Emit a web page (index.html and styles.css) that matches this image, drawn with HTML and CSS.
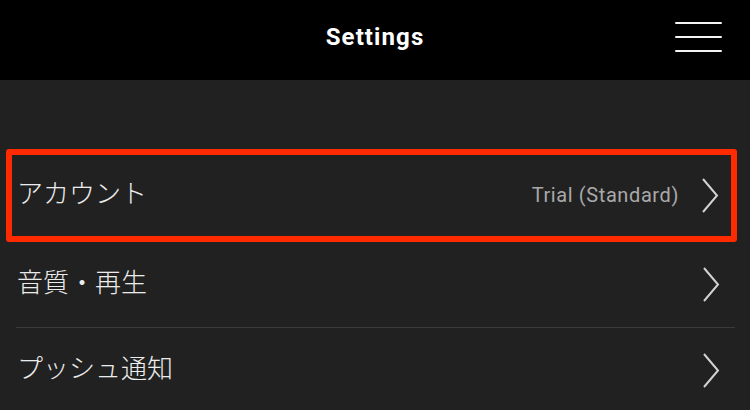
FILE: index.html
```html
<!DOCTYPE html>
<html lang="ja">
<head>
    <meta charset="UTF-8">
    <meta name="viewport" content="width=device-width, initial-scale=1.0">
    <title>Settings</title>
    <link rel="stylesheet" href="styles.css">
</head>
<body>
    <header class="topbar">
        <span></span>
        <h1 class="title">Settings</h1>
        <button class="menu" aria-label="menu">
            <span></span><span></span><span></span>
        </button>
    </header>

    <ul class="list">
        <li class="row highlight">
            <span class="label">アカウント</span>
            <span class="value">Trial (Standard)</span>
            <svg class="chevron" width="18" height="36" viewBox="0 0 18 36"><polyline points="2,1 16,17.5 2,34" /></svg>
        </li>
        <li class="row">
            <span class="label">音質・再生</span>
            <svg class="chevron" width="18" height="36" viewBox="0 0 18 36"><polyline points="2,1 16,17.5 2,34" /></svg>
        </li>
        <li class="row">
            <span class="label">プッシュ通知</span>
            <svg class="chevron" width="18" height="36" viewBox="0 0 18 36"><polyline points="2,1 16,17.5 2,34" /></svg>
        </li>
    </ul>
</body>
</html>
```

FILE: styles.css
```css
body {
    font-family: "Noto Sans CJK JP", "Noto Sans", sans-serif;
    margin: 0;
    background-color: #212121;
    color: #ececec;
    overflow: hidden;
}
.topbar {
    display: grid;
    grid-template-columns: 1fr auto 1fr;
    align-items: center;
    height: 80px;
    background-color: #000;
    padding: 0 28px 6px;
    box-sizing: border-box;
}
.title {
    margin: 0;
    font-family: Roboto, "Liberation Sans", sans-serif;
    font-size: 24px;
    font-weight: 700;
    color: #fff;
    letter-spacing: 1.1px;
}
.menu {
    justify-self: end;
    display: flex;
    flex-direction: column;
    gap: 12px;
    width: 47px;
    padding: 0;
    background: none;
    border: none;
}
.menu span {
    display: block;
    height: 2px;
    background-color: #f4f4f4;
    border-radius: 1px;
}
.list {
    list-style: none;
    margin: 69px 0 0;
    padding: 0;
}
.row {
    display: flex;
    align-items: center;
    height: 85px;
    margin: 0 15px 0 16px;
    padding: 0 15px 0 1px;
    border-bottom: 1px solid #3b3b3b;
}
.row:last-child {
    border-bottom: none;
}
.row.highlight {
    height: 81px;
    margin: 0 13px 0 6px;
    padding: 0 12px 0 5px;
    border: 6px solid #ff2a00;
    border-radius: 3px;
}
.label {
    flex: 1;
    font-size: 26px;
    font-weight: 300;
    line-height: 1;
    margin-top: -7px;
}
.value {
    font-family: Roboto, "Liberation Sans", sans-serif;
    font-size: 20px;
    letter-spacing: 0.6px;
    color: #a9a9a9;
    margin-right: 22px;
    margin-top: -2px;
}
.chevron {
    display: block;
}
.chevron polyline {
    fill: none;
    stroke: #d2d2d2;
    stroke-width: 2;
}
```
